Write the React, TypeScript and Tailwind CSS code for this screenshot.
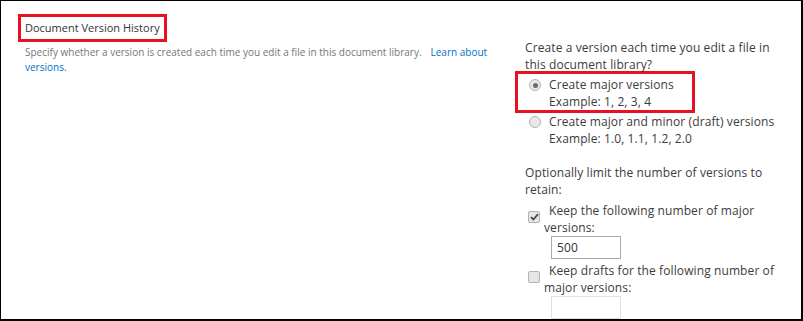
function Radio({ checked }: { checked?: boolean }) {
  return (
    <span className="mt-[3px] flex h-[12px] w-[12px] shrink-0 items-center justify-center rounded-full border border-[#b3b3b3] bg-[#e8e8e8]">
      {checked && <span className="h-[5px] w-[5px] rounded-full bg-[#6b6b6b]" />}
    </span>
  );
}

function Checkbox({ checked }: { checked?: boolean }) {
  return (
    <span className="mt-[9px] flex h-[12px] w-[12px] shrink-0 items-center justify-center rounded-[2px] border border-[#b3b3b3] bg-[#e6e6e6]">
      {checked && (
        <svg width="9" height="8" viewBox="0 0 9 8">
          <path d="M1 4.2 L3.4 6.5 L8 1.2" fill="none" stroke="#4a4a4a" strokeWidth="1.8" />
        </svg>
      )}
    </span>
  );
}

export default function App() {
  return (
    <div
      className="flex h-[321px] w-[803px] overflow-hidden border-b-2 border-l border-r-2 border-t border-black bg-white text-[#444]"
      style={{ fontFamily: '"Open Sans", sans-serif' }}
    >
      <div className="w-[524px] shrink-0 pl-[24px] pt-[13px]">
        <div className="-ml-[7px] flex h-[28px] w-[149px] items-center border-[3px] border-[#e81123] pl-[4px] text-[11px] text-[#333]">
          Document Version History
        </div>
        <p className="mt-[3px] text-[10px] leading-[15px] text-[#777]">
          Specify whether a version is created each time you edit a file in this document library.
          <span className="ml-[9px] text-[#0072c6]">Learn about</span>
          <br />
          <span className="text-[#0072c6]">versions.</span>
        </p>
      </div>

      <div className="flex-1 pt-[38px] text-[12px] leading-[17px] tracking-[0.1px] text-[#3c3c3c]">
        <p className="whitespace-nowrap">
          Create a version each time you edit a file in
          <br />
          this document library?
        </p>

        <div className="-ml-[10px] -mt-[2px] w-[180px] border-[3px] border-[#e81123] pl-[11px] pt-[2px]">
          <div className="flex gap-[8px]">
            <Radio checked />
            <div className="whitespace-nowrap">
              Create major versions
              <br />
              Example: 1, 2, 3, 4
            </div>
          </div>
        </div>

        <div className="ml-[4px] flex gap-[8px]">
          <Radio />
          <div className="whitespace-nowrap">
            Create major and minor (draft) versions
            <br />
            Example: 1.0, 1.1, 1.2, 2.0
          </div>
        </div>

        <p className="mt-[17px] whitespace-nowrap">
          Optionally limit the number of versions to
          <br />
          retain:
        </p>

        <div className="ml-[3px] mt-[4px] flex gap-[4px]">
          <Checkbox checked />
          <div className="whitespace-nowrap">
            <div className="pl-[5px]">Keep the following number of major</div>
            <div>versions:</div>
            <div className="ml-[7px] flex h-[23px] w-[70px] items-center border border-[#ababab] pl-[5px] text-[#333]">
              500
            </div>
          </div>
        </div>

        <div className="ml-[3px] mt-[3px] flex gap-[4px]">
          <Checkbox />
          <div className="whitespace-nowrap">
            <div className="pl-[5px]">Keep drafts for the following number of</div>
            <div>major versions:</div>
            <div className="ml-[7px] h-[23px] w-[70px] border border-[#e1e1e1]" />
          </div>
        </div>
      </div>
    </div>
  );
}
